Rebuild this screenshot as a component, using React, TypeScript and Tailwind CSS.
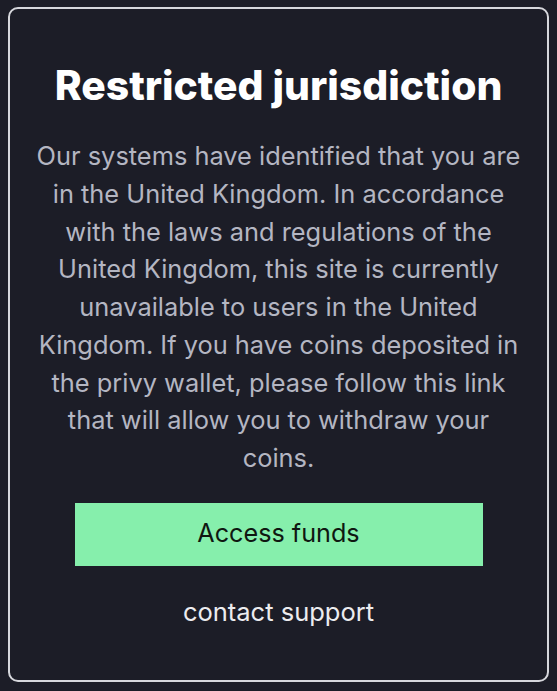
export default function App() {
  return (
    <div className="min-h-[691px] w-[557px] bg-[#1c1d27] px-[8px] pt-[7px] pb-[9px] font-['Inter',sans-serif]">
      <div className="flex flex-col items-center rounded-[10px] border-2 border-[#d6d7dc] px-[22px] pt-[52px] pb-[51px]">
        <h1 className="text-[40.8px] font-extrabold leading-[48px] text-white">Restricted jurisdiction</h1>
        <p className="mt-[28px] w-[490px] text-center text-[25.4px] leading-[37.75px] text-[#b4b6c2]">
          Our systems have identified that you are in the United Kingdom. In accordance with the laws and
          regulations of the United Kingdom, this site is currently unavailable to users in the United Kingdom. If
          you have coins deposited in the privy wallet, please follow this link that will allow you to withdraw your
          coins.
        </p>
        <button className="mt-[26px] h-[63px] w-[408px] bg-[#86efac] text-[25.2px] text-[#0f1711]">Access funds</button>
        <a className="mt-[29px] text-[25.5px] leading-[34px] text-[#ececef]">contact support</a>
      </div>
    </div>
  );
}
